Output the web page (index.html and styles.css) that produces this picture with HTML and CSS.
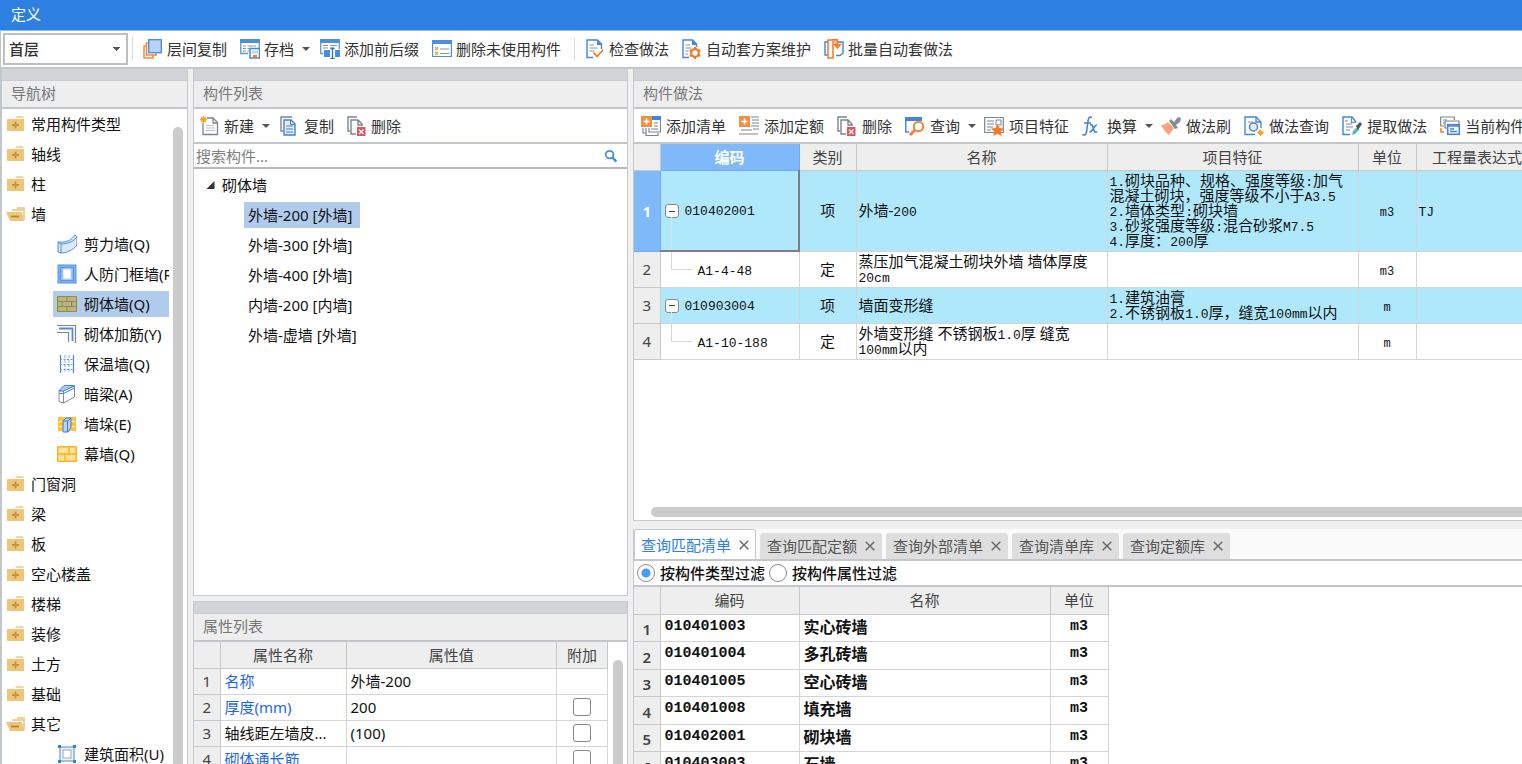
FILE: index.html
```html
<!DOCTYPE html>
<html lang="zh-CN">
<head>
<meta charset="utf-8">
<title>定义</title>
<link rel="stylesheet" href="styles.css">
</head>
<body>
<svg class="defs" aria-hidden="true">
  <symbol id="folder" viewBox="0 0 20 20"><path d="M9 4L10.500 2H17L18 4Z" fill="#f3d6a0"/><rect x="1" y="5" width="17" height="12" fill="#efc679"/><path d="M9.500 7.500v7M6 11h7" stroke="#c6943a" stroke-width="1.800"/></symbol>
  <symbol id="folder-open" viewBox="0 0 20 20"><path d="M6 5h4.500l1-2H19v13h-2V7H6Z" fill="#efd096"/><path d="M0 8h16l2 9H4Z" fill="#efc679"/><path d="M5 12.500h8" stroke="#b8862c" stroke-width="1.800"/></symbol>
  <symbol id="wall-curve" viewBox="0 0 20 20"><path d="M1 8C9 9 15 6 18 1l2 2v8c-4 5-10 8-16 8l-3-1Z" fill="#dbe9fb" stroke="#4b8cdc"/><path d="M1 8l3 2c7 0 13-3 16-7M4 10v9" fill="none" stroke="#4b8cdc"/></symbol>
  <symbol id="frame" viewBox="0 0 20 20"><rect x="1" y="1" width="18" height="18" fill="#7fb0f1" stroke="#5b95e3"/><rect x="3.500" y="3.500" width="13" height="13" fill="#8dbaf3" stroke="#5b95e3"/><rect x="6" y="5" width="8" height="10" fill="#fff" stroke="#b9d4f7"/></symbol>
  <symbol id="brick" viewBox="0 0 20 20"><path d="M0 2h20v16H0Z" fill="#b5b391"/><path d="M.5 2.500h19v15H.5ZM0 7.500h20M0 12.500h20M10 2v5.500M5 7.500v5M14.500 7.500v5M10 12.500V18" fill="none" stroke="#a28a28"/></symbol>
  <symbol id="rebar" viewBox="0 0 20 20"><path d="M0 1.500h18.500V19M0 8.500h11.500V18" fill="none" stroke="#7c8791" stroke-width="1.200"/><path d="M2 4.500h13.500V17" fill="none" stroke="#4b8cdc" stroke-width="1.800"/></symbol>
  <symbol id="insul" viewBox="0 0 20 20"><path d="M3.500 1v18M16.500 1v18" stroke="#4687dd" stroke-width="1.200"/><path d="M8 1v18M12 1v18" stroke="#7ba6de" stroke-dasharray="3 1.500"/><path d="M3 5.500h13M3 10.500h13M3 15.500h13" stroke="#7098c8" stroke-dasharray="2 1.500"/></symbol>
  <symbol id="beam" viewBox="0 0 20 20"><path d="M2 7h4.500v12L2 17.500ZM6.500 7L17.500 2v11l-11 6Z" fill="#fff" stroke="#7f8c99"/><path d="M2 6.500L7 1.500h10.500L6.500 7Z" fill="#a9ccfa" stroke="#4687dd"/><path d="M2 9.500h4.500l11-5.500" fill="none" stroke="#4687dd"/></symbol>
  <symbol id="pier" viewBox="0 0 20 20"><path d="M1 3h18v14H1Z" fill="#ffc13a"/><path d="M2 7.500h16M2 12.500h16" stroke="#fff1c8"/><path d="M6 7l3-3h5v9l-3 5H6Z" fill="#b8d4f7" stroke="#3f7dd0"/><path d="M10.500 7v11M6 7h5l3-3" stroke="#3f7dd0" fill="none"/></symbol>
  <symbol id="curtain" viewBox="0 0 20 20"><path d="M.75 2.750h18.500v14.500H.75ZM0 10h20M12 2.500V10M8 10v7" fill="#ffe2a0" stroke="#fcb321" stroke-width="1.400"/></symbol>
  <symbol id="area" viewBox="0 0 20 20"><rect x="3" y="3" width="14" height="14" fill="#edf3fb" stroke="#4687dd"/><rect x="6" y="6" width="8" height="8" fill="#fff" stroke="#9aa6b5"/><path d="M1 1h3v3H1ZM16 1h3v3h-3ZM1 16h3v3H1ZM16 16h3v3h-3Z" fill="#3b7bd3"/></symbol>

  <symbol id="layers" viewBox="0 0 20 20"><path d="M3.500 7H1v12h9v-2.500M6 4H3.500v12H13v-2" fill="none" stroke="#f08a3c" stroke-width="1.500"/><rect x="5.700" y=".7" width="12.600" height="13" fill="#b6d4fb" stroke="#4c90e6" stroke-width="1.400"/></symbol>
  <symbol id="archive" viewBox="0 0 20 20"><path d="M.75 1h18.500v8M.75 1v13.500H8" fill="none" stroke="#5b97dc" stroke-width="1.300"/><path d="M0 0h20v4H0Z" fill="#4c8fe0"/><path d="M3 7h3M3 9.500h3M3 12h3M7.500 7H16M7.500 9.500H9M7.500 12H9" stroke="#8793a0"/><rect x="10" y="9.500" width="9.500" height="9.500" fill="#fff" stroke="#4687dd" stroke-width="1.500"/><path d="M12 11.500h6v3h-6Z" fill="#bcd6f7"/><path d="M13 16h4v3h-4Z" fill="#f27e25"/></symbol>
  <symbol id="prefix" viewBox="0 0 20 20"><path d="M.75 1h18.500v9M.75 1v13.500H3" fill="none" stroke="#5b97dc" stroke-width="1.300"/><path d="M0 0h20v4H0Z" fill="#4c8fe0"/><path d="M3 6.500h5M10 6.500h7M3 9h5M10 9h4" stroke="#8793a0"/><path d="M4 11h6v7H4ZM15 11h5v7h-5Z" fill="#4b8ddd"/><path d="M12.500 10v9M10.500 9.500h4M10.500 19.500h4" stroke="#2f70c6" stroke-width="1.300"/></symbol>
  <symbol id="unused" viewBox="0 0 20 20"><path d="M.6 1.500h18.800v16H.6Z" fill="#fff" stroke="#4c8fe0" stroke-width="1.200"/><path d="M0 1h20v4H0Z" fill="#4c8fe0"/><path d="M3 8l3 3M6 8l-3 3M3 13l3 3M6 13l-3 3" stroke="#f0a03c" stroke-width="1.200"/><path d="M8 10h9M8 14.500h9" stroke="#8793a0" stroke-width="1.200"/></symbol>
  <symbol id="check" viewBox="0 0 20 20"><path d="M16.500 10V5l-4-4H2v17.500h6" fill="#fff" stroke="#4385db" stroke-width="1.400"/><path d="M12 1v5h5Z" fill="#4385db"/><path d="M4.500 6H9M4.500 9h8M4.500 12h5" stroke="#8793a0"/><path d="M8.500 13.500l3.500 4 6-6.500" fill="none" stroke="#f27a22" stroke-width="1.800"/></symbol>
  <symbol id="scheme" viewBox="0 0 20 20"><path d="M14.500 8V5l-4-4H1v17.500h6" fill="#fff" stroke="#4385db" stroke-width="1.400"/><path d="M10 1v5h5Z" fill="#4385db"/><path d="M3.500 6H8M3.500 9h6M3.500 12h3M3.500 15H6" stroke="#8793a0"/><circle cx="13" cy="14" r="3.800" fill="#fff" stroke="#f27a22" stroke-width="2.200"/><path d="M13 8v2M13 18v2M7.800 11l1.700 1M16.500 16l1.700 1M7.800 17l1.700-1M16.500 12l1.700-1" stroke="#f27a22" stroke-width="2.200"/></symbol>
  <symbol id="batch" viewBox="0 0 20 20"><path d="M4 3H1v13h4M13 3h6v11l-3 2.500h-4" fill="#fff" stroke="#4385db" stroke-width="1.400"/><path d="M4 1h5v18H4Z" fill="#fff" stroke="#f27a22" stroke-width="1.500"/><path d="M8 .8h5.500V7M10.500 5.500l3 3.500 3-3.500Z" fill="#f9b27c" stroke="#f27a22" stroke-width="1.400"/></symbol>
  <symbol id="new" viewBox="0 0 20 20"><path d="M7 2h6l4.500 4.500V18.500H3V7" fill="#fff" stroke="#7c858d" stroke-width="1.300"/><path d="M13 2v5h5" fill="none" stroke="#7c858d" stroke-width="1.300"/><path d="M6 9.500h8M6 12h9M6 14.500h9" stroke="#b9bfc5"/><path d="M3.500 0v7M0 3.500h7M1 1l5 5M6 1L1 6" stroke="#f6a02c" stroke-width="1.300"/></symbol>
  <symbol id="copy" viewBox="0 0 20 20"><path d="M12 1H1v14h2" fill="none" stroke="#7c858d" stroke-width="1.400"/><path d="M4 4h7l4 4v11H4Z" fill="#e6f0fd" stroke="#3f80d9" stroke-width="1.400"/><path d="M10.500 4v4.500H15M6 10h7M6 13h7M6 16h7" fill="none" stroke="#3f80d9"/></symbol>
  <symbol id="delete" viewBox="0 0 20 20"><path d="M10 1H1v14h2M9 18H4V4h7l4 4v2M11 4v5h4" fill="none" stroke="#7c858d" stroke-width="1.400"/><path d="M10 11h8.500v9H10Z" fill="#d9565c"/><path d="M12 13.500l4.500 4.500M16.500 13.500L12 18" stroke="#fff" stroke-width="1.300"/></symbol>
  <symbol id="add-list" viewBox="0 0 20 20"><path d="M11 0h9v4h-9Z" fill="#3e84e0"/><path d="M19.500 4v12H8v-4M5 12v7.500h12V17M2 12v5h3" fill="none" stroke="#7c858d" stroke-width="1.200"/><path d="M13 7h4M13 10h4M10 13h7" stroke="#7c858d"/><path d="M0 0h11v11H0Z" fill="#ee9145"/><path d="M5.500 2.500v6M2.500 5.500h6" stroke="#fff" stroke-width="1.500"/></symbol>
  <symbol id="add-quota" viewBox="0 0 20 20"><path d="M12 1h8M13 4h7M13 7h7M12 10h8M14 13h6M2 14h11M0 18h19" stroke="#7c858d" stroke-width="1.200"/><path d="M0 0h11v11H0Z" fill="#ee9145"/><path d="M5.500 2.500v6M2.500 5.500h6" stroke="#fff" stroke-width="1.500"/></symbol>
  <symbol id="query" viewBox="0 0 20 20"><path d="M0 1h17v4H0Z" fill="#4385db"/><path d="M.8 4v12H4" fill="none" stroke="#4385db" stroke-width="1.400"/><circle cx="13.500" cy="10.500" r="4.700" fill="#fff" stroke="#f08430" stroke-width="2"/><path d="M10 14l-5 5" stroke="#f08430" stroke-width="3"/></symbol>
  <symbol id="feature" viewBox="0 0 20 20"><path d="M.7 1.500h18.600v15H.7Z" fill="#fff" stroke="#7c858d" stroke-width="1.200"/><path d="M3 5h7M3 8h7M3 11h6M3 14h4M12 4h5v5h-5Z" fill="none" stroke="#7c858d"/><path d="M13.500 8l2 4 4.500.5-3.200 3 1 4.500-4.300-2.300L9.200 20l1-4.500-3.200-3 4.500-.5Z" fill="#f27b24"/></symbol>
  <symbol id="fx" viewBox="0 0 20 20"><path d="M10 1.500C7.500 0 6.500 2 6 5L4.500 16c-.5 3-2 3.500-4 2.500M2 7h7M8 9c3-1 2.500 1 3.500 4s1 4 3.500 2.500M15 9c-3-.5-4 7-7.500 7" fill="none" stroke="#4385db" stroke-width="1.600"/></symbol>
  <symbol id="brush" viewBox="0 0 20 20"><path d="M0 9c3 0 5-1 7-3l6 6c-2 3-4 5-5 7-2-1-6-6-8-10Z" fill="#fba477"/><path d="M8 5l2-2 3 3 4-5 3 1-1 4-4 3 2 3-3 1Z" fill="#818e98"/></symbol>
  <symbol id="doc-search" viewBox="0 0 20 20"><path d="M17 12V6l-5-5H1v17.500h10" fill="#f8fbff" stroke="#4385db" stroke-width="1.300"/><path d="M12 1v5h5" fill="none" stroke="#4385db" stroke-width="1.300"/><circle cx="9.500" cy="11" r="4" fill="#e2eefd" stroke="#5b83b5" stroke-width="1.500"/><path d="M4 6h5" stroke="#8793a0"/><path d="M13 16.500l3-3 4 3-3.500 3.500Z" fill="#f7a11e"/></symbol>
  <symbol id="extract" viewBox="0 0 20 20"><path d="M14 6l-4-5H1v17.500h7" fill="#fff" stroke="#4385db" stroke-width="1.400"/><path d="M9.500 1v5.500H14M4 8h6M4 11h7M4 14h4M3 5h3" fill="none" stroke="#6f8db1" stroke-width="1.200"/><path d="M10 19l1-4 4-4 2.500 2.500-4 4Z" fill="#57b6c1"/><path d="M14 10l4-4 2 2-4 6" fill="#4b5660"/></symbol>
  <symbol id="current" viewBox="0 0 20 20"><path d="M4 10H.7V1h13.600v3M3 4h4M3 7h2" fill="none" stroke="#7c858d" stroke-width="1.200"/><path d="M5 5h14v4M5 5v7h2" fill="none" stroke="#7c858d" stroke-width="1.200"/><rect x="7.700" y="8.700" width="11.600" height="9.600" fill="#fff" stroke="#4385db" stroke-width="1.600"/><path d="M8 10h11M10 13h4M10 15.500h7" stroke="#4385db" stroke-width="1.500"/><path d="M1 12v4h3" fill="none" stroke="#f08430" stroke-width="1.500"/></symbol>
  <symbol id="search" viewBox="0 0 20 20"><circle cx="8" cy="8" r="5.500" fill="none" stroke="#3f95cf" stroke-width="2.500"/><path d="M12 12l5.500 6" stroke="#3f95cf" stroke-width="3.500"/></symbol>
  <symbol id="close" viewBox="0 0 10 10"><path d="M.7 .7l8.600 8.600M9.300 .7L.7 9.300" stroke="#666" stroke-width="1.400"/></symbol>
</svg>

<header class="titlebar">定义</header>

<div class="toolbar toolbar-main">
  <select class="floor" aria-label="楼层"><option>首层</option></select>
  <span class="sep"></span>
  <button><svg><use href="#layers"/></svg>层间复制</button>
  <button><svg><use href="#archive"/></svg>存档<i class="caret"></i></button>
  <button><svg><use href="#prefix"/></svg>添加前后缀</button>
  <button><svg><use href="#unused"/></svg>删除未使用构件</button>
  <span class="sep"></span>
  <button><svg><use href="#check"/></svg>检查做法</button>
  <button><svg><use href="#scheme"/></svg>自动套方案维护</button>
  <button><svg><use href="#batch"/></svg>批量自动套做法</button>
</div>

<main class="workspace">
  <nav class="panel">
    <div class="strip"></div>
    <h2>导航树</h2>
    <div class="nav-body">
      <ul class="nav-tree">
        <li><svg><use href="#folder"/></svg>常用构件类型</li>
        <li><svg><use href="#folder"/></svg>轴线</li>
        <li><svg><use href="#folder"/></svg>柱</li>
        <li><svg><use href="#folder-open"/></svg>墙</li>
        <li class="child"><span><svg><use href="#wall-curve"/></svg>剪力墙(Q)</span></li>
        <li class="child"><span><svg><use href="#frame"/></svg>人防门框墙(RF)</span></li>
        <li class="child selected"><span><svg><use href="#brick"/></svg>砌体墙(Q)</span></li>
        <li class="child"><span><svg><use href="#rebar"/></svg>砌体加筋(Y)</span></li>
        <li class="child"><span><svg><use href="#insul"/></svg>保温墙(Q)</span></li>
        <li class="child"><span><svg><use href="#beam"/></svg>暗梁(A)</span></li>
        <li class="child"><span><svg><use href="#pier"/></svg>墙垛(E)</span></li>
        <li class="child"><span><svg><use href="#curtain"/></svg>幕墙(Q)</span></li>
        <li><svg><use href="#folder"/></svg>门窗洞</li>
        <li><svg><use href="#folder"/></svg>梁</li>
        <li><svg><use href="#folder"/></svg>板</li>
        <li><svg><use href="#folder"/></svg>空心楼盖</li>
        <li><svg><use href="#folder"/></svg>楼梯</li>
        <li><svg><use href="#folder"/></svg>装修</li>
        <li><svg><use href="#folder"/></svg>土方</li>
        <li><svg><use href="#folder"/></svg>基础</li>
        <li><svg><use href="#folder-open"/></svg>其它</li>
        <li class="child"><span><svg><use href="#area"/></svg>建筑面积(U)</span></li>
      </ul>
      <div class="vscroll"></div>
    </div>
  </nav>

  <div class="column">
    <section class="panel list-panel">
      <div class="strip"></div>
      <h2>构件列表</h2>
      <div class="toolbar toolbar-panel">
        <button><svg><use href="#new"/></svg>新建<i class="caret"></i></button>
        <button><svg><use href="#copy"/></svg>复制</button>
        <button><svg><use href="#delete"/></svg>删除</button>
      </div>
      <label class="search"><input type="text" placeholder="搜索构件..." aria-label="搜索构件"><svg><use href="#search"/></svg></label>
      <ul class="part-tree">
        <li class="root"><svg viewBox="0 0 8 8"><path d="M8 0v8H0Z" fill="#333"/></svg>砌体墙</li>
        <li class="selected"><span>外墙-200 [外墙]</span></li>
        <li><span>外墙-300 [外墙]</span></li>
        <li><span>外墙-400 [外墙]</span></li>
        <li><span>内墙-200 [内墙]</span></li>
        <li><span>外墙-虚墙 [外墙]</span></li>
      </ul>
    </section>

    <section class="panel prop-panel">
      <div class="strip"></div>
      <h2>属性列表</h2>
      <div class="prop-body">
        <table class="grid prop-grid">
          <colgroup><col class="c-num"><col class="c-pname"><col><col class="c-extra"></colgroup>
          <thead><tr><th></th><th>属性名称</th><th>属性值</th><th>附加</th></tr></thead>
          <tbody>
            <tr><th>1</th><td class="blue">名称</td><td>外墙-200</td><td></td></tr>
            <tr><th>2</th><td class="blue">厚度(mm)</td><td>200</td><td class="mid"><input type="checkbox" aria-label="厚度附加"></td></tr>
            <tr><th>3</th><td>轴线距左墙皮...</td><td>(100)</td><td class="mid"><input type="checkbox" aria-label="轴线距左墙皮附加"></td></tr>
            <tr><th>4</th><td class="blue">砌体通长筋</td><td></td><td class="mid"><input type="checkbox" aria-label="砌体通长筋附加"></td></tr>
          </tbody>
        </table>
        <div class="vscroll"></div>
      </div>
    </section>
  </div>

  <div class="column">
    <section class="panel method-panel">
      <div class="strip"></div>
      <h2>构件做法</h2>
      <div class="toolbar toolbar-panel toolbar-method">
        <button><svg><use href="#add-list"/></svg>添加清单</button>
        <button><svg><use href="#add-quota"/></svg>添加定额</button>
        <button><svg><use href="#delete"/></svg>删除</button>
        <button><svg><use href="#query"/></svg>查询<i class="caret"></i></button>
        <button><svg><use href="#feature"/></svg>项目特征</button>
        <button><svg><use href="#fx"/></svg>换算<i class="caret"></i></button>
        <button><svg><use href="#brush"/></svg>做法刷</button>
        <button><svg><use href="#doc-search"/></svg>做法查询</button>
        <button><svg><use href="#extract"/></svg>提取做法</button>
        <button><svg><use href="#current"/></svg>当前构件自动套做法</button>
      </div>
      <div class="method-body">
        <table class="grid method-grid">
          <colgroup><col class="c-num"><col class="c-code"><col class="c-kind"><col class="c-name"><col class="c-feat"><col class="c-unit"><col class="c-expr"></colgroup>
          <thead><tr><th></th><th class="active">编码</th><th>类别</th><th>名称</th><th>项目特征</th><th>单位</th><th>工程量表达式</th></tr></thead>
          <tbody>
            <tr class="bill tall"><th class="active">1</th><td class="code current"><button class="toggle" aria-label="折叠"></button><b>010402001</b></td><td class="mid">项</td><td>外墙-<b>200</b></td><td><b>1.</b>砌块品种、规格、强度等级<b>:</b>加气混凝土砌块，强度等级不小于<b>A3.5</b><br><b>2.</b>墙体类型<b>:</b>砌块墙<br><b>3.</b>砂浆强度等级<b>:</b>混合砂浆<b>M7.5</b><br><b>4.</b>厚度：<b>200</b>厚</td><td class="mid unit"><b>m3</b></td><td><b>TJ</b></td></tr>
            <tr><th>2</th><td class="code leaf"><b>A1-4-48</b></td><td class="mid">定</td><td>蒸压加气混凝土砌块外墙 墙体厚度<br><b>20cm</b></td><td></td><td class="mid unit"><b>m3</b></td><td></td></tr>
            <tr class="bill"><th>3</th><td class="code"><button class="toggle" aria-label="折叠"></button><b>010903004</b></td><td class="mid">项</td><td>墙面变形缝</td><td><b>1.</b>建筑油膏<br><b>2.</b>不锈钢板<b>1.0</b>厚，缝宽<b>100mm</b>以内</td><td class="mid unit"><b>m</b></td><td></td></tr>
            <tr><th>4</th><td class="code leaf"><b>A1-10-188</b></td><td class="mid">定</td><td>外墙变形缝 不锈钢板<b>1.0</b>厚 缝宽<br><b>100mm</b>以内</td><td></td><td class="mid unit"><b>m</b></td><td></td></tr>
          </tbody>
        </table>
      </div>
      <div class="hscroll"></div>
    </section>

    <section class="query-panel">
      <div class="tabs">
        <button class="tab on">查询匹配清单<svg><use href="#close"/></svg></button>
        <button class="tab">查询匹配定额<svg><use href="#close"/></svg></button>
        <button class="tab">查询外部清单<svg><use href="#close"/></svg></button>
        <button class="tab">查询清单库<svg><use href="#close"/></svg></button>
        <button class="tab">查询定额库<svg><use href="#close"/></svg></button>
      </div>
      <div class="filters">
        <label><input type="radio" name="filter" checked>按构件类型过滤</label>
        <label><input type="radio" name="filter">按构件属性过滤</label>
      </div>
      <div class="query-body">
        <table class="grid query-grid">
          <colgroup><col class="c-num"><col class="c-code"><col class="c-name"><col class="c-unit"></colgroup>
          <thead><tr><th></th><th>编码</th><th>名称</th><th>单位</th></tr></thead>
          <tbody>
            <tr><th>1</th><td class="num">010401003</td><td>实心砖墙</td><td class="mid num">m3</td></tr>
            <tr><th>2</th><td class="num">010401004</td><td>多孔砖墙</td><td class="mid num">m3</td></tr>
            <tr><th>3</th><td class="num">010401005</td><td>空心砖墙</td><td class="mid num">m3</td></tr>
            <tr><th>4</th><td class="num">010401008</td><td>填充墙</td><td class="mid num">m3</td></tr>
            <tr><th>5</th><td class="num">010402001</td><td>砌块墙</td><td class="mid num">m3</td></tr>
            <tr><th>6</th><td class="num">010403003</td><td>石墙</td><td class="mid num">m3</td></tr>
          </tbody>
        </table>
      </div>
    </section>
  </div>
</main>
</body>
</html>
```

FILE: styles.css
```css
* { box-sizing: border-box; }

body {
  margin: 0;
  height: 100vh;
  overflow: hidden;
  display: flex;
  flex-direction: column;
  background: #f0f0f0;
  color: #111;
  font: 15px/20px "Noto Sans", "Noto Sans CJK SC", sans-serif;
}

.defs { display: none; }
ul { list-style: none; margin: 0; padding: 0; }
button, input, select { font: inherit; color: inherit; }
button { border: 0; background: none; padding: 0; white-space: nowrap; }

.titlebar {
  flex: none;
  height: 31px;
  padding: 4px 11px;
  background: #2d80e2;
  border-bottom: 1px solid #8fb9ea;
  color: #fff;
}

/* toolbars */
.toolbar {
  flex: none;
  display: flex;
  align-items: center;
  gap: 13px;
  background: #fff;
  color: #333;
  overflow: hidden;
}
.toolbar button {
  display: flex;
  align-items: center;
  gap: 4px;
  height: 26px;
  flex: none;
}
.toolbar svg { width: 20px; height: 20px; flex: none; }
.toolbar-main {
  height: 38px;
  padding-left: 2px;
  border-left: 1px solid #bcc5d2;
  border-bottom: 2px solid #c3c7cc;
}
.toolbar-panel {
  height: 35px;
  padding-left: 6px;
  border-bottom: 2px solid #c3c7cc;
}
.toolbar-method { padding-left: 7px; }
.toolbar-method button { gap: 5px; }
.toolbar .caret { margin: 0 -3px 0 4px; }
.toolbar-method .caret { margin: 0 -5px 0 3px; }
.sep { width: 1px; height: 24px; background: #dcdcdc; margin-right: -3px; }
.floor + .sep { margin-left: -9px; }
.caret {
  border: 4px solid transparent;
  border-top-color: #555;
  border-bottom: 0;
}
.floor {
  width: 125px;
  height: 32px;
  padding: 0 4px;
  border: 2px solid #bfbfbf;
  appearance: none;
  font-weight: 500;
  background:
    linear-gradient(to bottom left, #555 50%, transparent 50%) right 9px center / 4px 4px no-repeat,
    linear-gradient(to bottom right, #555 50%, transparent 50%) right 5px center / 4px 4px no-repeat,
    #fff;
}

/* panels */
.workspace {
  flex: 1;
  min-height: 0;
  display: grid;
  grid-template-columns: 187px 435px minmax(0, 1fr);
  column-gap: 5px;
  border-left: 1px solid #bcc5d2;
}
.column { display: flex; flex-direction: column; min-height: 0; min-width: 0; }
.panel {
  display: flex;
  flex-direction: column;
  min-height: 0;
  min-width: 0;
  border: 1px solid #c6c9cd;
  border-top: 0;
  background: #fff;
}
.strip { flex: none; height: 12px; background: #d3d4da; border-bottom: 1px solid #c8ccd2; }
h2 {
  flex: none;
  margin: 0;
  height: 28px;
  padding: 2px 9px;
  background: #eee;
  border-bottom: 2px solid #c3c6ca;
  color: #777;
  font-size: 15px;
  font-weight: 400;
}

/* navigation tree */
nav.panel { border-bottom: 0; }
.nav-body { flex: 1; min-height: 0; display: flex; overflow: hidden; }
.nav-tree { flex: 1; min-width: 0; }
.nav-tree li {
  height: 30px;
  display: flex;
  align-items: center;
  gap: 5px;
  padding-left: 4px;
  white-space: nowrap;
}
.nav-tree svg { width: 20px; height: 20px; flex: none; }
.nav-tree .child { padding-left: 51px; }
.nav-tree .child span {
  flex: 1;
  min-width: 0;
  display: flex;
  align-items: center;
  gap: 7px;
  height: 26px;
  padding-left: 4px;
  overflow: hidden;
}
.nav-tree .selected span { background: #b0cbec; }
.vscroll {
  flex: none;
  width: 10px;
  margin: 18px 4px 0;
  background: #cbcbcb;
  border-radius: 5px 5px 0 0;
}

/* component list */
.list-panel { flex: 1; }
.search {
  flex: none;
  display: flex;
  align-items: center;
  height: 25px;
  border-bottom: 2px solid #b8b8b8;
  padding-right: 9px;
}
.search input {
  flex: 1;
  min-width: 0;
  border: 0;
  outline: 0;
  padding: 0 2px;
  height: 22px;
  background: none;
}
.search input::placeholder { color: #808080; }
.search svg { width: 14px; height: 14px; }
.part-tree { flex: 1; min-height: 0; padding-top: 1px; }
.part-tree li { height: 30px; display: flex; align-items: center; padding-left: 50px; }
.part-tree .root { padding-left: 12px; gap: 7px; }
.part-tree .root svg { width: 9px; height: 8px; }
.part-tree span { height: 26px; line-height: 26px; padding: 0 8px 0 4px; }
.part-tree .selected span { background: #b0cbec; }

/* tables */
.grid { border-collapse: collapse; table-layout: fixed; }
.grid th, .grid td { border: 1px solid #d4d4d4; padding: 0; }
.grid tr > :first-child { border-left: 0; }
.grid th { background: #eee; color: #444; font-weight: 400; border-color: #c8c8c8; }
.grid thead th { border-top: 0; }
.grid .mid { text-align: center; }
.c-num { width: 26px; }

.prop-panel { flex: 0 0 163px; margin-top: 5px; border-top: 1px solid #c6c9cd; border-bottom: 0; }
.prop-body { flex: 1; min-height: 0; display: flex; overflow: hidden; }
.prop-body .vscroll { margin-left: 5px; }
.prop-grid { flex: 1; min-width: 0; align-self: flex-start; }
.prop-grid tr { height: 26px; }
.prop-grid td { padding-left: 4px; white-space: nowrap; }
.prop-grid .mid { padding: 0; }
.prop-grid .blue { color: #1d66f0; }
.c-pname { width: 126px; }
.c-extra { width: 51px; }
.prop-grid input {
  display: block;
  appearance: none;
  width: 18px;
  height: 18px;
  margin: 0 auto;
  border: 1px solid #888;
  border-radius: 3px;
  background: #fff;
}

.method-panel { flex: 1; border-right: 0; }
.method-body { flex: 1; min-height: 0; overflow: hidden; }
.method-grid { width: 904px; }
.method-grid thead tr { height: 26px; }
.method-grid tbody tr { height: 36px; }
.method-grid tbody .tall { height: 81px; }
.method-grid td { padding-left: 2px; line-height: 15px; }
.method-grid td.mid { padding: 0; }
.method-grid b { font: 13px/0 "Liberation Mono", monospace; }
.method-grid .unit b { font-size: 12px; }
.method-grid th.active { background: #80b9f9; border-color: #6fabf0; color: #fff; font-weight: 700; }
.method-grid .bill td { background: #afe8fa; }
.method-grid .current { border-right: 2px solid #7f7f7f; border-bottom: 2px solid #7f7f7f; }
.method-grid .code { position: relative; padding-left: 4px; white-space: nowrap; }
.method-grid .leaf { padding-left: 37px; }
.method-grid .leaf::before {
  content: "";
  position: absolute;
  left: 10px;
  top: 0;
  width: 20px;
  height: 50%;
  border: solid #d8d8d8;
  border-width: 0 0 1px 1px;
}
.method-grid .bill .code::after {
  content: "";
  position: absolute;
  left: 10px;
  top: calc(50% + 7px);
  bottom: 0;
  border-left: 1px solid #d8e4e8;
}
.toggle {
  width: 14px;
  height: 14px;
  margin-right: 6px;
  border: 1px solid #8a8a8a;
  border-radius: 3px;
  vertical-align: middle;
  background: linear-gradient(#444, #444) center / 6px 1px no-repeat, #fff;
}
.c-code { width: 139px; }
.c-kind { width: 57px; }
.c-name, .c-feat { width: 251px; }
.c-unit { width: 58px; }
.c-expr { width: 122px; }
.hscroll {
  flex: none;
  height: 10px;
  margin: 0 0 3px 17px;
  border-radius: 5px 0 0 5px;
  background: #cbcbcb;
}

/* query panel */
.query-panel {
  flex: 0 0 235px;
  margin-top: 8px;
  min-height: 0;
  display: flex;
  flex-direction: column;
  border-left: 1px solid #c6c9cd;
  background: #fff;
}
.tabs {
  flex: none;
  display: flex;
  align-items: flex-end;
  gap: 4px;
  height: 32px;
  background: #fafafa;
  border-bottom: 2px solid #c3c7cc;
}
.tab {
  display: flex;
  align-items: center;
  gap: 8px;
  height: 26px;
  padding: 0 7px;
  border-radius: 3px 3px 0 0;
  background: #dedede;
  color: #555;
}
.tab.on {
  height: 30px;
  padding: 0 6px;
  background: #fff;
  border: 1px solid #c6c9cd;
  border-bottom: 0;
  color: #2d80e2;
}
.tab svg { width: 10px; height: 10px; }
.filters {
  flex: none;
  display: flex;
  align-items: center;
  gap: 4px;
  height: 26px;
  padding-left: 3px;
  border-bottom: 2px solid #c3c7cc;
  font-weight: 500;
}
.filters label { display: flex; align-items: center; gap: 5px; }
.filters input {
  appearance: none;
  width: 18px;
  height: 18px;
  margin: 0;
  border: 1px solid #888;
  border-radius: 50%;
  background: #fff;
}
.filters input:checked { background: radial-gradient(circle, #4a9bf5 4px, #fff 5px); }
.query-body { flex: 1; min-height: 0; overflow: hidden; }
.query-grid { width: 474px; }
.query-grid tr { height: 27px; }
.query-grid tbody tr:nth-child(even) { height: 28px; }
.query-grid tbody th { font-weight: 600; line-height: 16px; vertical-align: bottom; padding-bottom: 4px; }
.query-grid td { padding-left: 4px; font-size: 16px; font-weight: 700; vertical-align: top; line-height: 24px; }
.query-grid td.mid { padding: 0; }
.query-grid .num { font: 700 15px/24px "Liberation Mono", monospace; }
```
